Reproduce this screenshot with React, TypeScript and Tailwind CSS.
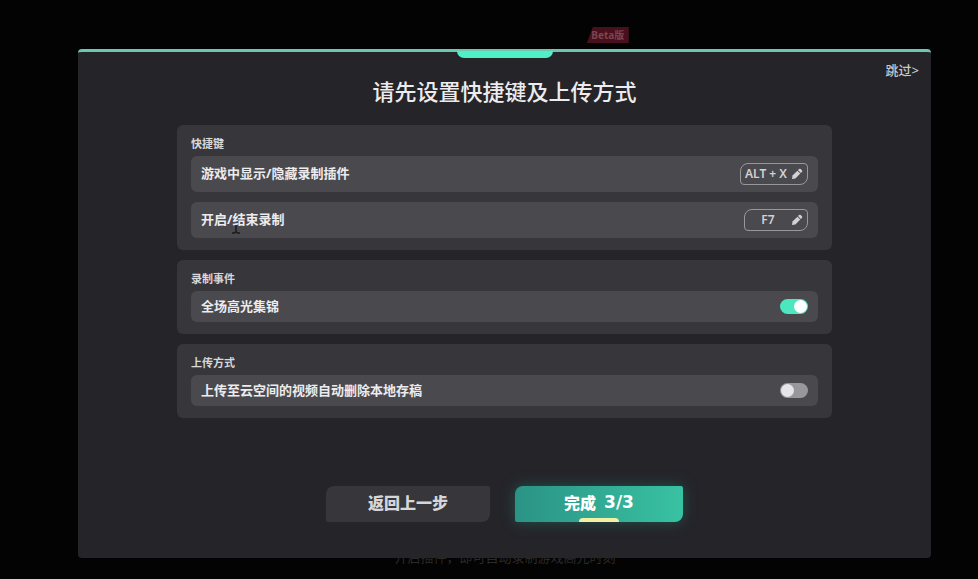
import { useState } from 'react'
import type { ReactNode } from 'react'

function Section({ title, children }: { title: string; children: ReactNode }) {
  return (
    <section className="rounded-md bg-[#37363b] px-3.5 pt-[11px] pb-3">
      <h2 className="mb-[5px] text-[11px] leading-[15px] font-bold text-[#d8d8da]">{title}</h2>
      <div className="flex flex-col gap-2.5">{children}</div>
    </section>
  )
}

function PencilIcon() {
  return (
    <svg viewBox="0 0 12 12" className="size-3 shrink-0" fill="#d2d2d4" aria-hidden="true">
      <path d="M1 11l.5-3.400L6.400 2.700l2.900 2.900L4.400 10.500z" />
      <path d="M7 2.100l1-1a1.200 1.200 0 0 1 1.700 0l1.200 1.200a1.200 1.200 0 0 1 0 1.700l-1 1z" />
    </svg>
  )
}

function HotkeyRow({ label, hotkey }: { label: string; hotkey: string }) {
  return (
    <div className="flex h-9 items-center justify-between rounded-md bg-[#4a494e] px-2.5">
      <span className="text-[13px] font-bold">{label}</span>
      <button
        type="button"
        aria-label={`${label} ${hotkey}`}
        className="flex h-[22px] min-w-16 items-center gap-1 rounded-tl-lg rounded-tr-sm rounded-br-lg rounded-bl-sm border border-[#98979b] px-1"
      >
        <span className="flex-1 text-center text-xs font-semibold text-[#d2d2d4]">{hotkey}</span>
        <PencilIcon />
      </button>
    </div>
  )
}

function ToggleRow({ label, defaultOn }: { label: string; defaultOn: boolean }) {
  const [on, setOn] = useState(defaultOn)

  return (
    <label className="flex h-[31px] items-center justify-between rounded-md bg-[#4a494e] px-2.5">
      <span className="text-[13px] font-bold">{label}</span>
      <input
        type="checkbox"
        role="switch"
        checked={on}
        onChange={(e) => setOn(e.target.checked)}
        className="flex h-[15px] w-7 appearance-none items-center rounded-full bg-[#98979b] px-px before:size-[13px] before:rounded-full before:bg-[#e6e5ea] checked:justify-end checked:bg-[#4ce6bf] checked:before:bg-white"
      />
    </label>
  )
}

export default function App() {
  return (
    <div className="relative flex min-h-screen flex-col bg-[#030303] pt-[49px] pr-[47px] pb-[21px] pl-[78px] font-['Noto_Sans','Noto_Sans_CJK_SC',sans-serif] text-[#ececee]">
      {/* dimmed page behind the dialog */}
      <span className="absolute top-[27px] left-[60%] flex h-4 w-[42px] items-center justify-center bg-[#47101c] text-[10px] font-bold text-[#7d4450] [clip-path:polygon(6px_0,100%_0,100%_100%,0_100%)]">
        Beta版
      </span>
      <p aria-hidden="true" className="absolute bottom-3.5 left-[calc(50%+16px)] -translate-x-1/2 text-[13px] leading-4 whitespace-nowrap text-[#2a2a2a]">
        开启插件，即可自动录制游戏高光时刻
      </p>

      <main className="relative flex flex-1 flex-col rounded-sm border-t-[3px] border-[#68c9b1] bg-[#252429] px-[99px]">
        <div className="absolute -top-px left-1/2 h-[7px] w-24 -translate-x-1/2 rounded-b-lg bg-[#50efc8]" />
        <a href="#skip" className="absolute top-2 right-3 text-[13px] leading-5 font-medium text-[#c9c9cb]">
          跳过&gt;
        </a>

        <h1 className="mt-[23px] text-center text-[22px] leading-8 font-medium">请先设置快捷键及上传方式</h1>

        <div className="mt-[18px] flex flex-col gap-2.5">
          <Section title="快捷键">
            <HotkeyRow label="游戏中显示/隐藏录制插件" hotkey="ALT + X" />
            <HotkeyRow label="开启/结束录制" hotkey="F7" />
          </Section>
          <Section title="录制事件">
            <ToggleRow label="全场高光集锦" defaultOn />
          </Section>
          <Section title="上传方式">
            <ToggleRow label="上传至云空间的视频自动删除本地存稿" defaultOn={false} />
          </Section>
        </div>

        {/* text cursor over the second hotkey row */}
        <svg viewBox="0 0 10 14" className="absolute top-[168px] left-[153px] h-3.5 w-2.5" fill="none" stroke="#1b1b1d" strokeWidth="1.500" aria-hidden="true">
          <path d="M5 5v7M1 13h2.500L5 11.500 6.500 13H9" />
        </svg>

        <div className="mt-auto mb-9 flex justify-center gap-[25px]">
          <button
            type="button"
            className="h-9 w-[164px] rounded-tl-lg rounded-tr-xs rounded-br-lg rounded-bl-xs bg-[#37363b] pb-0.5 text-base font-black text-[#d6d6d8]"
          >
            返回上一步
          </button>
          <button
            type="button"
            className="relative flex h-9 w-[168px] items-center justify-center gap-2 rounded-tl-lg rounded-tr-xs rounded-br-lg rounded-bl-xs bg-linear-to-r from-[#2b9385] to-[#38c2a2] pb-0.5 text-base font-black text-white shadow-[0_0_14px_#24514d]"
          >
            <span>完成</span>
            <span className="font-['DejaVu_Sans',sans-serif] text-[17px] font-bold">3/3</span>
            <span className="absolute bottom-0 left-1/2 h-1 w-10 -translate-x-1/2 rounded-t-md bg-[#f2f0a4]" />
          </button>
        </div>
      </main>
    </div>
  )
}
